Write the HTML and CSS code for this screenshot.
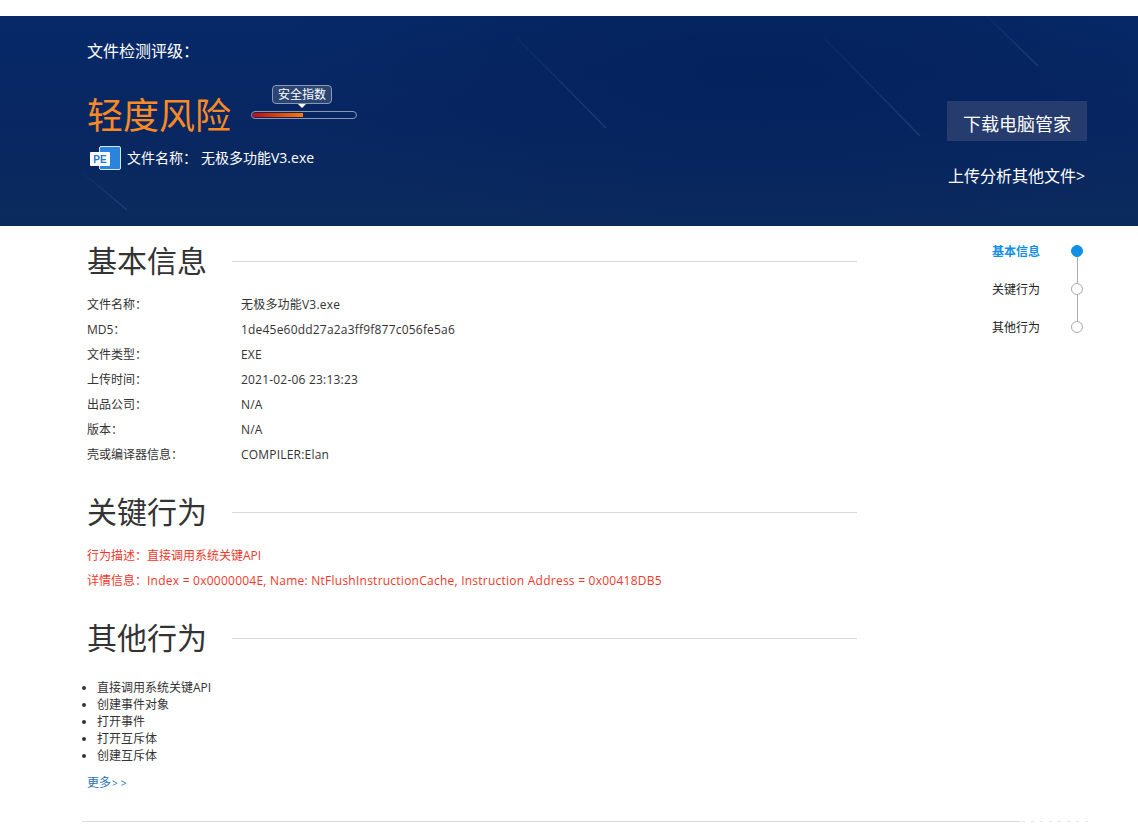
FILE: index.html
```html
<!DOCTYPE html>
<html lang="zh-CN">
<head>
<meta charset="utf-8">
<title>文件检测报告</title>
<link rel="stylesheet" href="styles.css">
</head>
<body>
<header class="banner">
  <svg class="streaks" width="1138" height="210" viewBox="0 0 1138 210" aria-hidden="true">
    <defs>
      <linearGradient id="fade" x1="0" y1="0" x2="1" y2="1">
        <stop offset="0" stop-color="#2a5596" stop-opacity=".08"/>
        <stop offset="1" stop-color="#2a5596" stop-opacity=".5"/>
      </linearGradient>
    </defs>
    <g stroke="url(#fade)" stroke-width="1.5" fill="none">
      <line x1="987" y1="0" x2="1038" y2="50"/>
      <line x1="824" y1="22" x2="920" y2="120"/>
      <line x1="517" y1="22" x2="606" y2="112"/>
      <line x1="83" y1="157" x2="127" y2="194"/>
    </g>
  </svg>
  <div class="banner-left">
    <div class="rating-label">文件检测评级：</div>
    <div class="risk-row">
      <div class="risk-text">轻度风险</div>
      <div class="gauge">
        <div class="gauge-tip">安全指数</div>
        <div class="gauge-track"><div class="gauge-fill"></div></div>
      </div>
    </div>
    <div class="file-row">
      <svg class="pe-icon" width="32" height="24" viewBox="0 0 32 24" aria-hidden="true">
        <rect x="10.5" y="0.5" width="21" height="23" rx="1.5" fill="#2a84dc" stroke="#d5e8fa"/>
        <rect x="1" y="6" width="20" height="14" rx="1" fill="#ffffff"/>
        <text class="pe-text" x="11" y="17" text-anchor="middle">PE</text>
      </svg>
      <span class="file-key">文件名称：</span>
      <span>无极多功能V3.exe</span>
    </div>
  </div>
  <div class="banner-right">
    <a class="download-btn">下载电脑管家</a>
    <a class="upload-link">上传分析其他文件&gt;</a>
  </div>
</header>

<div class="page">
  <main class="content">
    <section class="section-info">
      <h2 class="section-title"><span>基本信息</span></h2>
      <dl class="info-list">
        <div class="info-row"><dt>文件名称：</dt><dd>无极多功能V3.exe</dd></div>
        <div class="info-row"><dt>MD5：</dt><dd>1de45e60dd27a2a3ff9f877c056fe5a6</dd></div>
        <div class="info-row"><dt>文件类型：</dt><dd>EXE</dd></div>
        <div class="info-row"><dt>上传时间：</dt><dd>2021-02-06 23:13:23</dd></div>
        <div class="info-row"><dt>出品公司：</dt><dd>N/A</dd></div>
        <div class="info-row"><dt>版本：</dt><dd>N/A</dd></div>
        <div class="info-row"><dt>壳或编译器信息：</dt><dd>COMPILER:Elan</dd></div>
      </dl>
    </section>
    <section class="section-key">
      <h2 class="section-title"><span>关键行为</span></h2>
      <p class="alert">行为描述：直接调用系统关键API</p>
      <p class="alert">详情信息：<span class="alert-detail">Index = 0x0000004E, Name: NtFlushInstructionCache, Instruction Address = 0x00418DB5</span></p>
    </section>
    <section class="section-other">
      <h2 class="section-title"><span>其他行为</span></h2>
      <ul class="behavior-list">
        <li>直接调用系统关键API</li>
        <li>创建事件对象</li>
        <li>打开事件</li>
        <li>打开互斥体</li>
        <li>创建互斥体</li>
      </ul>
      <a class="more">更多<span class="more-arrows">&gt;&gt;</span></a>
    </section>
  </main>
  <nav class="side-nav">
    <div class="nav-item active"><span>基本信息</span><i class="dot"></i></div>
    <div class="nav-item"><span>关键行为</span><i class="dot"></i></div>
    <div class="nav-item"><span>其他行为</span><i class="dot"></i></div>
  </nav>
</div>
<div class="footer-rule"><div class="rule-solid"></div><div class="rule-faded"></div></div>
</body>
</html>
```

FILE: styles.css
```css
* { box-sizing: border-box; }
html, body { margin: 0; padding: 0; }
body {
  background: #fff;
  color: #333;
  font-family: "Open Sans", "Noto Sans CJK SC", sans-serif;
  font-size: 12px;
  height: 832px;
  overflow: hidden;
  padding-top: 16px;
}
.banner {
  position: relative;
  height: 210px;
  padding: 0 51px 0 87px;
  display: flex;
  justify-content: space-between;
  color: #fff;
  background:
    radial-gradient(ellipse 500px 160px at 760px 60px, #04225c 0%, rgba(4, 34, 92, 0) 100%),
    linear-gradient(180deg, #062968 0%, #082762 50%, #0b2a5c 100%);
  overflow: hidden;
}
.streaks { position: absolute; left: 0; top: 0; }
.banner-left, .banner-right { position: relative; }
.rating-label { font-size: 16px; line-height: 22px; margin-top: 24px; }
.risk-row { display: flex; margin-top: 21px; height: 56px; }
.risk-text { color: #f98a24; font-size: 36px; line-height: 56px; width: 164px; padding-top: 5px; }
.gauge { width: 106px; margin-top: 2px; display: flex; flex-direction: column; align-items: center; padding-right: 4px; }
.gauge-tip {
  position: relative;
  flex: none;
  font-size: 12px;
  line-height: 17px;
  height: 19px;
  width: 60px;
  text-align: center;
  border: 1px solid #8b99b8;
  border-radius: 4px;
  background: #2c4674;
}
.gauge-tip::after {
  content: "";
  position: absolute;
  left: 25px;
  top: 18px;
  border: 4px solid transparent;
  border-top-color: #fff;
  border-bottom: 0;
}
.gauge-track {
  flex: none;
  width: 106px;
  height: 8px;
  margin: 7px -4px 0 0;
  border: 1px solid #8b99b8;
  border-radius: 4px;
  padding: 1px;
  overflow: hidden;
}
.gauge-fill { width: 50px; height: 4px; background: linear-gradient(90deg, #c40a0a, #ff7a00); }
.file-row { display: flex; align-items: center; font-size: 14px; line-height: 24px; margin-top: 7px; margin-left: 2px; }
.pe-icon { margin-right: 6px; flex: none; }
.pe-text { font-family: "Liberation Sans", sans-serif; font-size: 10px; font-weight: 700; fill: #1f78d1; }
.file-key { margin-right: 4px; }
.banner-right { width: 140px; }
.download-btn {
  display: block;
  width: 140px;
  height: 40px;
  margin-top: 85px;
  background: #273c6e;
  font-size: 18px;
  line-height: 46px;
  text-align: center;
}
.upload-link { display: block; font-size: 16px; line-height: 22px; margin: 24px 0 0 1px; white-space: nowrap; }

.page { position: relative; }
.content { width: 857px; padding-left: 87px; }
.section-title {
  margin: 0;
  display: flex;
  align-items: center;
  font-size: 30px;
  font-weight: 400;
  line-height: 40px;
  height: 44px;
  color: #333;
}
.section-title span { width: 145px; flex: none; white-space: nowrap; }
.section-title::after { content: ""; flex: 1; height: 1px; background: #d9d9d9; }
.section-info { padding-top: 13px; }
.info-list { margin: 9px 0 0; }
.info-row { display: flex; height: 25px; line-height: 25px; }
.info-row dt { width: 154px; }
.info-row dd { margin: 0; letter-spacing: .2px; }
.section-key { padding-top: 23px; }
.alert { margin: 0; height: 25px; line-height: 25px; color: #f0382a; }
.alert-detail { letter-spacing: .24px; }
.section-key .section-title { margin-bottom: 9px; }
.section-other { padding-top: 23px; }
.behavior-list { margin: 19px 0 0; padding: 0 0 0 10px; list-style: disc; }
.behavior-list li { line-height: 17px; }
.more { display: block; color: #2a6fb5; margin-top: 10px; line-height: 17px; }
.more-arrows { font-size: 10px; letter-spacing: 3px; margin-left: 1px; }

.side-nav { position: absolute; top: 6px; left: 992px; width: 92px; }
.side-nav::before {
  content: "";
  position: absolute;
  left: 85px;
  top: 20px;
  width: 1px;
  height: 76px;
  background: #aaa;
}
.nav-item { display: flex; justify-content: space-between; align-items: center; height: 38px; color: #222; font-size: 12px; position: relative; }
.nav-item span { font-weight: 400; }
.nav-item .dot { width: 12px; height: 12px; border-radius: 50%; border: 1px solid #aaa; background: #fff; margin-right: 1px; }
.nav-item.active { color: #0f8fe6; }
.nav-item.active span { font-weight: 700; }
.nav-item.active .dot { border-color: #0f8fe6; background: #0f8fe6; }

.footer-rule { position: absolute; top: 821px; left: 82px; display: flex; height: 1px; }
.rule-solid { width: 938px; background: #dcdcdc; }
.rule-faded { width: 72px; margin-left: 2px; background: repeating-linear-gradient(90deg, #e6e6e6 0 3px, #fff 3px 9px); }
```
